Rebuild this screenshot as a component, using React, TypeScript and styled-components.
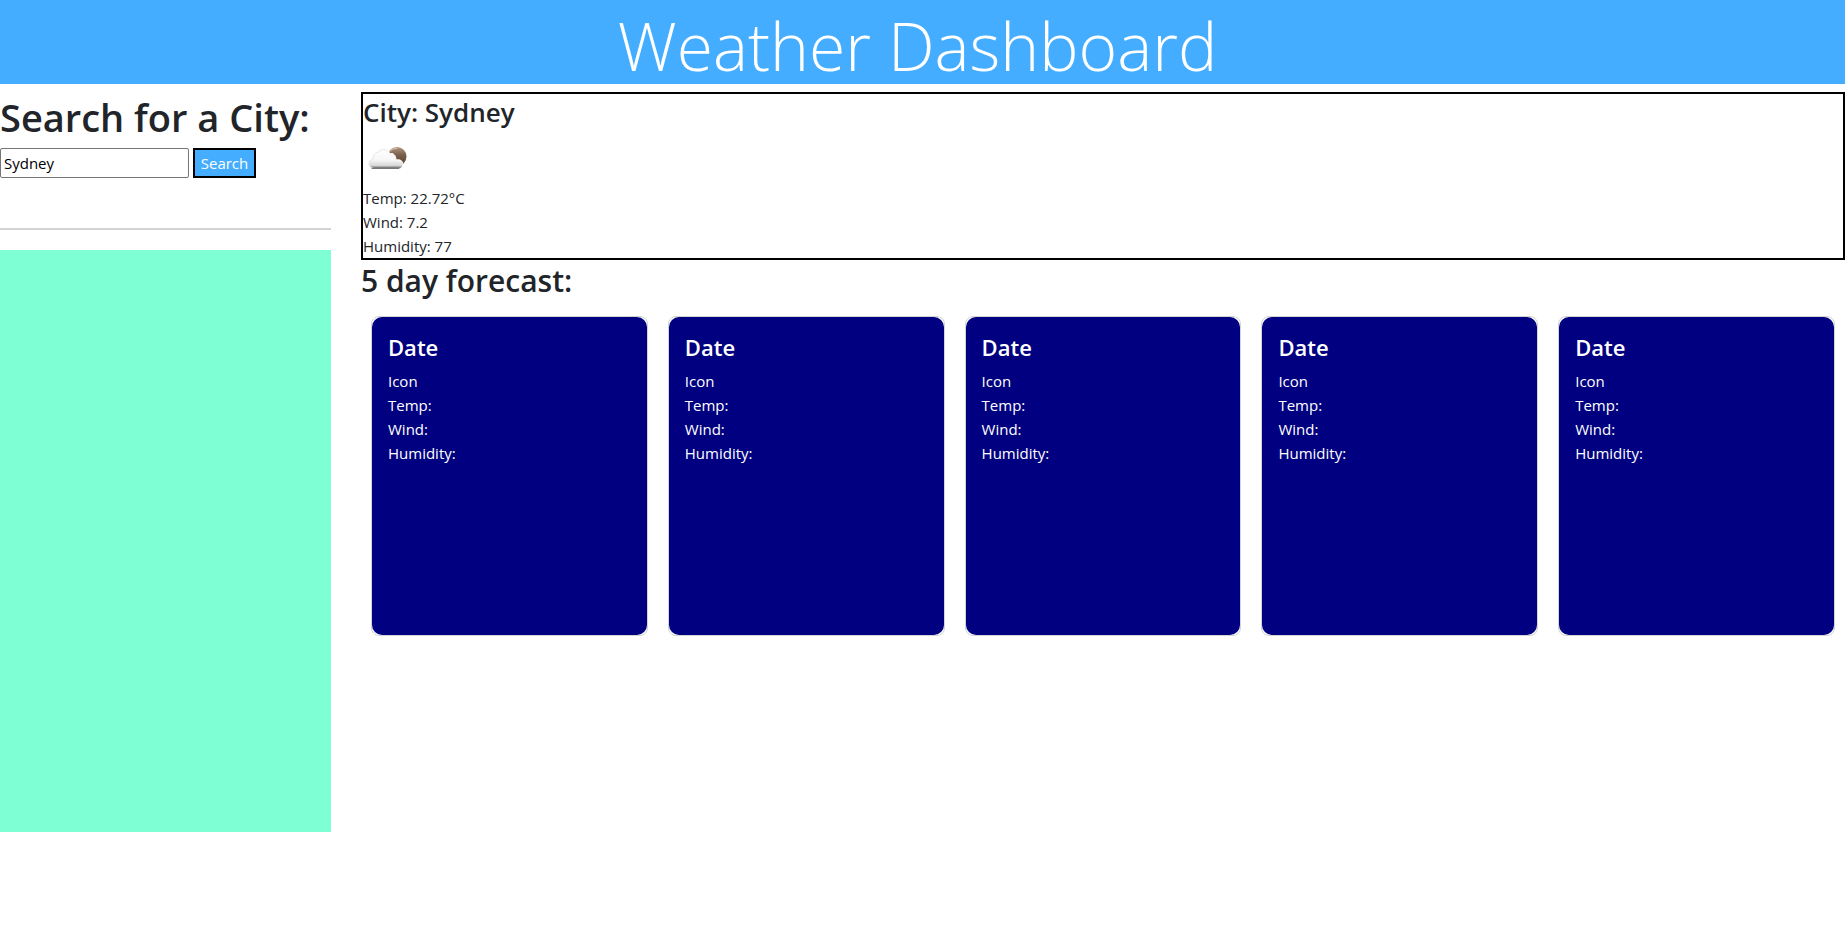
import React from "react";
import styled, { createGlobalStyle } from "styled-components";

const GlobalStyle = createGlobalStyle`
  *, *::before, *::after { box-sizing: border-box; }
  body {
    margin: 0;
    background: #fff;
    color: #212529;
    font-family: "Segoe UI", "Open Sans", "Noto Sans", sans-serif;
    font-size: 15px;
    line-height: 24px;
  }
  h1, h2, h3, p { margin: 0; }
`;

const Header = styled.header`
  display: flex;
  justify-content: center;
  height: 84px;
  background: #44adff;
  color: #fff;
`;

const Title = styled.h1`
  padding-right: 10px;
  font-size: 66px;
  font-weight: 300;
  line-height: 90px;
  white-space: nowrap;
`;

const Layout = styled.div`
  display: grid;
  grid-template-columns: 331fr 1484fr;
  column-gap: 30px;
  padding-top: 8px;
`;

const Sidebar = styled.aside`
  min-width: 0;
`;

const SearchForm = styled.form`
  display: grid;
  grid-template-columns: minmax(0, 189px) 63px;
  column-gap: 4px;
`;

const SearchLabel = styled.label`
  grid-column: 1 / -1;
  padding-bottom: 6px;
  font-size: 38px;
  font-weight: 600;
  line-height: 50px;
  white-space: nowrap;
`;

const SearchInput = styled.input`
  height: 30px;
  padding: 1px 3px;
  border: 1px solid #767676;
  border-radius: 2px;
  background: #fff;
  color: #000;
  font: inherit;
`;

const SearchButton = styled.button`
  height: 30px;
  padding: 0;
  border: 2px solid #000;
  background: #44adff;
  color: #fff;
  font: inherit;
`;

const Divider = styled.hr`
  height: 2px;
  margin: 50px 0 20px;
  border: 0;
  background: #d3d3d3;
`;

const History = styled.section`
  height: 582px;
  background: aquamarine;
`;

const Main = styled.main`
  min-width: 0;
`;

const Current = styled.section`
  border: 2px solid #000;
`;

const CityName = styled.h2`
  font-size: 26px;
  font-weight: 600;
  line-height: 36px;
`;

const WeatherIcon = styled.svg`
  display: block;
  width: 50px;
  height: 50px;
  margin: 3px 0;
`;

const ForecastTitle = styled.h2`
  padding-bottom: 2px;
  font-size: 30px;
  font-weight: 600;
  line-height: 42px;
`;

const Cards = styled.div`
  display: grid;
  grid-template-columns: repeat(5, minmax(0, 1fr));
  gap: 20px;
  padding: 12px 10px;
`;

const Card = styled.article`
  height: 320px;
  border: 1px solid #d3d3d3;
  border-radius: 8px;
`;

const CardBody = styled.div`
  height: 100%;
  padding: 16px;
  border-radius: 10px;
  background: navy;
  color: #fff;
`;

const CardTitle = styled.h3`
  padding-bottom: 8px;
  font-size: 22px;
  font-weight: 600;
  line-height: 28px;
`;

const days = [1, 2, 3, 4, 5];

function BrokenClouds() {
  return (
    <WeatherIcon viewBox="0 0 50 50" role="img" aria-label="Broken clouds">
      <defs>
        <linearGradient id="sun" x1="0" y1="0" x2="0" y2="1">
          <stop offset="0" stopColor="#b7977e" />
          <stop offset="0.4" stopColor="#7c614e" />
          <stop offset="1" stopColor="#503b2e" />
        </linearGradient>
        <linearGradient id="cloud" x1="0" y1="0" x2="0" y2="1">
          <stop offset="0" stopColor="#ffffff" />
          <stop offset="0.55" stopColor="#f7f7f7" />
          <stop offset="0.86" stopColor="#d5d5d5" />
          <stop offset="0.93" stopColor="#858585" />
          <stop offset="1" stopColor="#707070" />
        </linearGradient>
      </defs>
      <g transform="translate(1 -1)">
        <circle cx="33" cy="24.500" r="9.500" fill="url(#sun)" />
        <path d="M25 20.500a9 9 0 0 1 8-4" fill="none" stroke="#dcc8b8" strokeWidth="1" />
        <path
          d="M10 36.500C3 36.500 3 27.500 9 27C9 22 12 20.500 14 20.500C17 15 25 17 25.500 22C29 20.500 32 23 32 28C36 27 39 29 39 32.500C39 35 37 36.500 35 36.500Z"
          fill="url(#cloud)"
          stroke="#fff"
          strokeWidth="1"
        />
        <path
          d="M10 36.500C4 36.500 3.500 28 9 27C9 22 12 20.500 14 20.500C16 17 21 16.500 24 19.500"
          fill="none"
          stroke="#e6e6e6"
          strokeWidth="1"
        />
        <path d="M8 36.500H35" stroke="#777" strokeWidth="1" strokeLinecap="round" />
      </g>
    </WeatherIcon>
  );
}

export default function App() {
  return (
    <>
      <GlobalStyle />
      <Header>
        <Title>Weather Dashboard</Title>
      </Header>
      <Layout>
        <Sidebar>
          <SearchForm onSubmit={(event: React.FormEvent) => event.preventDefault()}>
            <SearchLabel htmlFor="city">Search for a City:</SearchLabel>
            <SearchInput id="city" type="text" defaultValue="Sydney" />
            <SearchButton type="submit">Search</SearchButton>
          </SearchForm>
          <Divider />
          <History aria-label="Search history" />
        </Sidebar>
        <Main>
          <Current>
            <CityName>City: Sydney</CityName>
            <BrokenClouds />
            <p>Temp: 22.72°C</p>
            <p>Wind: 7.2</p>
            <p>Humidity: 77</p>
          </Current>
          <ForecastTitle>5 day forecast:</ForecastTitle>
          <Cards>
            {days.map((day) => (
              <Card key={day}>
                <CardBody>
                  <CardTitle>Date</CardTitle>
                  <p>Icon</p>
                  <p>Temp:</p>
                  <p>Wind:</p>
                  <p>Humidity:</p>
                </CardBody>
              </Card>
            ))}
          </Cards>
        </Main>
      </Layout>
    </>
  );
}
